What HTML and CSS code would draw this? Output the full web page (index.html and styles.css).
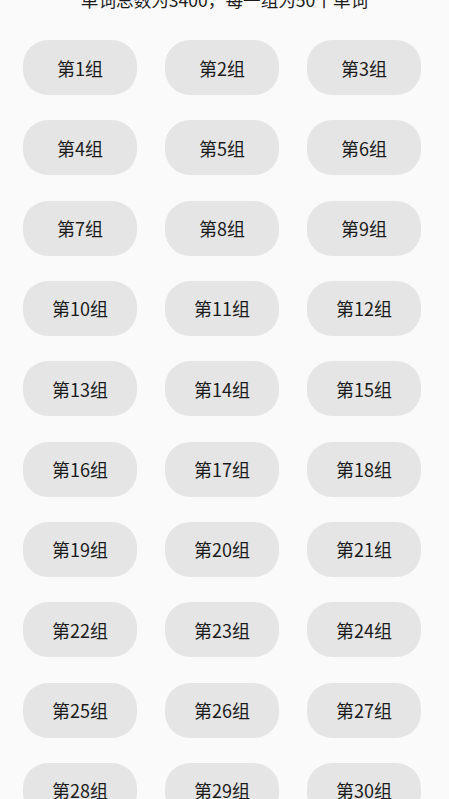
FILE: index.html
```html
<!DOCTYPE html>
<html lang="zh-CN">
<head>
<meta charset="utf-8">
<link rel="stylesheet" href="styles.css">
</head>
<body>
<div class="page">
  <div class="summary">单词总数为3400，每一组为50个单词</div>
  <div class="grid">
    <div class="group">第1组</div>
    <div class="group">第2组</div>
    <div class="group">第3组</div>
    <div class="group">第4组</div>
    <div class="group">第5组</div>
    <div class="group">第6组</div>
    <div class="group">第7组</div>
    <div class="group">第8组</div>
    <div class="group">第9组</div>
    <div class="group">第10组</div>
    <div class="group">第11组</div>
    <div class="group">第12组</div>
    <div class="group">第13组</div>
    <div class="group">第14组</div>
    <div class="group">第15组</div>
    <div class="group">第16组</div>
    <div class="group">第17组</div>
    <div class="group">第18组</div>
    <div class="group">第19组</div>
    <div class="group">第20组</div>
    <div class="group">第21组</div>
    <div class="group">第22组</div>
    <div class="group">第23组</div>
    <div class="group">第24组</div>
    <div class="group">第25组</div>
    <div class="group">第26组</div>
    <div class="group">第27组</div>
    <div class="group">第28组</div>
    <div class="group">第29组</div>
    <div class="group">第30组</div>
  </div>
</div>
</body>
</html>
```
FILE: styles.css
```css
html, body {
  margin: 0;
  padding: 0;
  background: #fafafa;
  overflow: hidden;
}
body {
  width: 449px;
  height: 799px;
  font-family: "Noto Sans CJK SC", "Noto Sans", sans-serif;
  color: #1c1c1c;
}
.page {
  display: flex;
  flex-direction: column;
}
.summary {
  height: 17px;
  line-height: 17px;
  margin-top: -9px;
  font-size: 17.6px;
  text-align: center;
  color: #1c1c1c;
}
.grid {
  margin-top: 32px;
  padding-left: 23px;
  display: grid;
  grid-template-columns: repeat(3, 114px);
  column-gap: 28px;
  row-gap: 25.33px;
}
.group {
  height: 55px;
  border-radius: 25px;
  background: #e4e5e4;
  display: flex;
  align-items: center;
  justify-content: center;
  font-size: 18px;
  color: #1c1c1c;
}
```
